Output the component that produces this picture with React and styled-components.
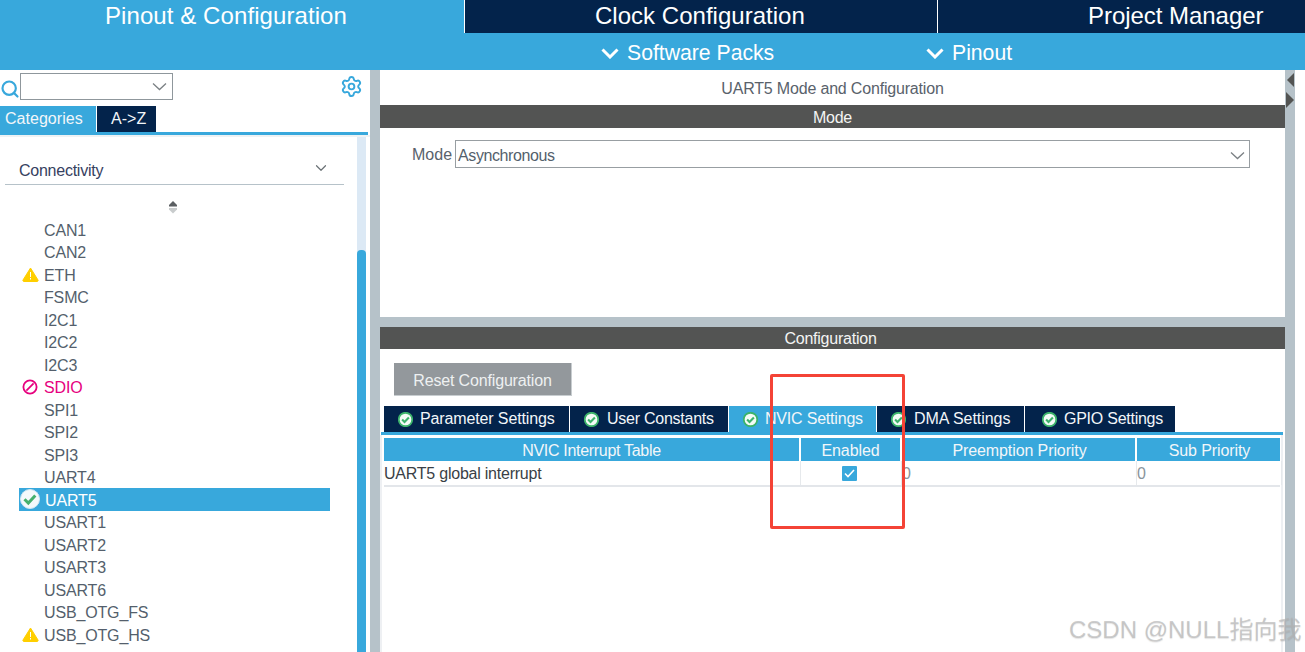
import React from "react";
import styled, { createGlobalStyle } from "styled-components";
import { Search, Settings, ChevronDown } from "lucide-react";

const BLUE = "#38a8dc";
const NAVY = "#03234b";
const SPLIT = "#b6c2c9";
const BAR = "#535453";

const GlobalStyle = createGlobalStyle`
  html, body { margin: 0; padding: 0; background: #fff; }
  * { box-sizing: border-box; }
  body { font-family: "Liberation Sans", Arial, sans-serif; font-size: 16px; }
`;

const Page = styled.div`
  position: relative;
  width: 1305px;
  height: 652px;
  overflow: hidden;
  display: flex;
  flex-direction: column;
`;

const TopTabs = styled.div`
  display: grid;
  grid-template-columns: 464px 472px 1fr;
  column-gap: 1px;
  height: 33px;
  background: #fff;
`;

const TopTab = styled.div`
  height: 33px;
  padding-left: ${(p) => p.$pad}px;
  background: ${(p) => (p.$active ? BLUE : NAVY)};
  color: #fff;
  font-size: 24px;
  line-height: 32px;
  letter-spacing: ${(p) => p.$track}px;
  white-space: nowrap;
`;

const SubBar = styled.div`
  display: flex;
  height: 37px;
  padding: 3px 0 0 601px;
  background: ${BLUE};
`;

const SubItem = styled.div`
  display: flex;
  align-items: center;
  gap: 8px;
  width: ${(p) => p.$width}px;
  color: #fff;
  font-size: 21.2px;
  line-height: 34px;
  white-space: nowrap;
`;

const Main = styled.div`
  display: flex;
  flex: 1;
  min-height: 0;
`;

const LeftPanel = styled.aside`
  display: flex;
  flex-direction: column;
  width: 370px;
`;

const SearchRow = styled.div`
  display: flex;
  align-items: center;
  height: 36px;
  padding: 0 7px 3px 0;
  color: ${BLUE};
`;

const SearchIcon = styled(Search)`
  flex: none;
  width: 20px;
  height: 20px;
  margin-top: 4px;
`;

const Combo = styled.div`
  display: flex;
  align-items: center;
  justify-content: flex-end;
  width: 153px;
  height: 27px;
  margin-right: auto;
  padding-right: 5px;
  border: 1px solid #8f979c;
  background: #fff;
  color: #7b8084;
`;

const GearIcon = styled(Settings)`
  width: 23px;
  height: 23px;
  color: ${BLUE};
`;

const ModeTabs = styled.div`
  display: flex;
  column-gap: 1px;
  width: 368px;
  height: 29px;
  border-bottom: 3px solid ${BLUE};
`;

const ModeTab = styled.div`
  width: ${(p) => p.$width}px;
  padding-left: ${(p) => p.$pad}px;
  background: ${(p) => (p.$active ? BLUE : NAVY)};
  color: #f2f6f9;
  line-height: 25px;
  letter-spacing: 0.03px;
`;

const ListArea = styled.div`
  display: flex;
  flex: 1;
  min-height: 0;
  border-top: 2px solid #eef2f4;
`;

const ListColumn = styled.div`
  width: 357px;
`;

const CategoryHead = styled.div`
  display: flex;
  align-items: center;
  justify-content: space-between;
  width: 339px;
  height: 48px;
  margin-left: 5px;
  padding: 21px 14px 0 14px;
  border-bottom: 1px solid ${SPLIT};
  color: #36415f;
  letter-spacing: -0.25px;
`;

const HeadChevron = styled(ChevronDown)`
  width: 18px;
  height: 18px;
  margin-top: -7px;
  color: #6b7276;
`;

const ScrollHint = styled.div`
  display: flex;
  justify-content: center;
  width: 346px;
  height: 33px;
  padding-top: 16px;
`;

const Peripherals = styled.ul`
  margin: 0;
  padding: 0 0 0 19px;
  list-style: none;
`;

const Peripheral = styled.li`
  position: relative;
  display: flex;
  align-items: center;
  width: 311px;
  height: 22.5px;
  padding-top: 3px;
  padding-left: ${(p) => (p.$selected ? 26 : 25)}px;
  background: ${(p) => (p.$selected ? BLUE : "transparent")};
  color: ${(p) => (p.$selected ? "#fff" : p.$pink ? "#e6007e" : "#545f6c")};
  letter-spacing: -0.15px;
`;

const StatusSlot = styled.span`
  position: absolute;
  left: ${(p) => p.$left}px;
  top: ${(p) => p.$top}px;
  display: flex;
`;

const Scrollbar = styled.div`
  width: 9px;
  background: #dce9f5;
`;

const ScrollThumb = styled.div`
  height: 100%;
  margin-top: 113px;
  border-radius: 4px 4px 0 0;
  background: ${BLUE};
`;

const Splitter = styled.div`
  flex: none;
  width: 10px;
  background: ${SPLIT};
`;

const RightSplitter = styled(Splitter)`
  padding: 2px 0 0 1px;
`;

const RightPanel = styled.section`
  display: flex;
  flex-direction: column;
  width: 905px;
`;

const ModePane = styled.div`
  height: 247px;
`;

const PaneTitle = styled.div`
  height: 35px;
  padding-top: 1px;
  color: #59626b;
  line-height: 35px;
  letter-spacing: -0.18px;
  text-align: center;
`;

const SectionBar = styled.div`
  height: ${(p) => p.$height}px;
  padding-right: ${(p) => p.$shift}px;
  background: ${BAR};
  color: #f4f4f4;
  line-height: ${(p) => p.$line}px;
  letter-spacing: -0.23px;
  text-align: center;
`;

const ModeRow = styled.div`
  display: flex;
  align-items: center;
  gap: 3px;
  margin-top: 12px;
  padding-left: 32px;
  color: #59626b;
`;

const ModeLabel = styled.span`
  padding-top: 2px;
`;

const ModeSelect = styled.div`
  display: flex;
  align-items: center;
  justify-content: space-between;
  width: 795px;
  height: 28px;
  padding: 3px 4px 0 2px;
  border: 1px solid #989ea2;
  color: #545f6c;
  letter-spacing: -0.4px;
`;

const HorizontalSplit = styled.div`
  height: 10px;
  background: ${SPLIT};
`;

const ConfigPane = styled.div`
  display: flex;
  flex: 1;
  flex-direction: column;
`;

const ResetButton = styled.div`
  align-self: flex-start;
  width: 178px;
  height: 33px;
  margin: 14px 0 10px 14px;
  border-right: 1px solid #c8cdd0;
  border-bottom: 1px solid #c8cdd0;
  background: #93989c;
  color: #eef0f1;
  line-height: 35px;
  letter-spacing: -0.16px;
  text-align: center;
`;

const ConfigTabs = styled.div`
  display: flex;
  column-gap: 1px;
  width: 902px;
  height: 29px;
  margin-left: 1px;
  padding-left: 3px;
  border-bottom: 3px solid ${BLUE};
`;

const ConfigTab = styled.div`
  display: flex;
  align-items: center;
  gap: ${(p) => p.$gap}px;
  width: ${(p) => p.$width}px;
  padding-left: ${(p) => p.$pad}px;
  background: ${(p) => (p.$active ? BLUE : NAVY)};
  color: #f2f6f9;
  letter-spacing: ${(p) => p.$track}px;
  white-space: nowrap;
`;

const TableFrame = styled.div`
  flex: 1;
  width: 903px;
  padding: 3px 2px 0 2px;
  border-left: 2px solid #eef0f3;
  border-right: 2px solid #eef0f3;
`;

const NvicGrid = styled.div`
  display: grid;
  grid-template-columns: 415px 99px 233px 143px;
  column-gap: 2px;
  width: 896px;
  border-bottom: 2px solid #e3e6ea;
`;

const HeadCell = styled.div`
  height: 23px;
  padding-left: ${(p) => p.$nudge || 0}px;
  background: ${BLUE};
  color: #f2f6f9;
  line-height: 25px;
  letter-spacing: ${(p) => p.$track}px;
  text-align: center;
`;

const DataCell = styled.div`
  display: flex;
  align-items: center;
  justify-content: ${(p) => (p.$center ? "center" : "flex-start")};
  height: 24px;
  margin-right: -2px;
  padding: 1px ${(p) => (p.$center ? 3 : 0)}px 0 0;
  border-right: 1px solid #e6e9ec;
  color: ${(p) => (p.$muted ? "#8a949c" : "#3a3f46")};
  letter-spacing: -0.23px;
`;

const CheckBox = styled.span`
  display: flex;
  align-items: center;
  justify-content: center;
  width: 15px;
  height: 15px;
  margin-top: -1px;
  background: ${BLUE};
  border-radius: 1px;
`;

const RedBox = styled.div`
  position: absolute;
  left: 770px;
  top: 374px;
  width: 135px;
  height: 155px;
  border: 3px solid #f44336;
  border-radius: 2px;
  pointer-events: none;
`;

const Watermark = styled.div`
  position: absolute;
  left: 1069px;
  top: 615px;
  color: rgba(178, 178, 178, 0.65);
  font-family: "Liberation Sans", "Noto Sans CJK SC", sans-serif;
  font-size: 24px;
  line-height: 30px;
  white-space: nowrap;
  text-shadow: 0 1px 1px rgba(120, 120, 120, 0.2);
`;

const Chevron = () => (
  <svg width="18" height="11" viewBox="0 0 18 11" fill="none">
    <path d="M1.5 1.5l7.5 7.5 7.5-7.5" stroke="#fff" strokeWidth="3" />
  </svg>
);

const SmallChevron = () => (
  <svg width="15" height="9" viewBox="0 0 15 9" fill="none">
    <path d="M1 1.5l6.5 6 6.5-6" stroke="#7b8084" strokeWidth="1.3" />
  </svg>
);

const WarnIcon = () => (
  <svg width="17" height="15" viewBox="0 0 17 15">
    <path d="M8.5 1L16 13a1 1 0 0 1-1 1.5H2A1 1 0 0 1 1 13z" fill="#ffcf00" stroke="#ffcf00" strokeLinejoin="round" />
    <rect x="8" y="5" width="1" height="5" fill="#fff" />
    <rect x="8" y="11" width="1" height="1.5" fill="#fff" />
  </svg>
);

const BanIcon = () => (
  <svg width="16" height="16" viewBox="0 0 16 16" fill="none" stroke="#e6007e" strokeWidth="1.8">
    <circle cx="8" cy="8" r="6.6" />
    <path d="M4.4 11.6l7.2-7.2" />
  </svg>
);

const TabBadge = () => (
  <svg width="15" height="15" viewBox="0 0 20 20">
    <circle cx="10" cy="10" r="9" fill="#f4fbf6" stroke="#3db36b" strokeWidth="2.4" />
    <path d="M5.5 10l3.2 3.3 5.8-6" fill="none" stroke="#3db36b" strokeWidth="2.8" />
  </svg>
);

const SelectedBadge = () => (
  <svg width="20" height="20" viewBox="0 0 20 20">
    <circle cx="10" cy="10" r="9.5" fill="#f4f9fb" stroke="#cfe6f2" strokeWidth="1" />
    <path d="M4.5 10.2l3.8 3.8 7-7.5" fill="none" stroke="#45b06d" strokeWidth="3" />
  </svg>
);

const ScrollArrows = () => (
  <svg width="10" height="13" viewBox="0 0 10 13">
    <path d="M5 0l4 4v1.5H1V4z" fill="#5b5f62" />
    <path d="M1 7h8v1.5l-4 4-4-4z" fill="#c9cccd" />
  </svg>
);

const SplitArrows = () => (
  <svg width="9" height="38" viewBox="0 0 9 38">
    <path d="M8 1v14L1 8z" fill="#535453" />
    <path d="M0 20l8 8-8 8z" fill="#535453" />
  </svg>
);

const peripherals = [
  { name: "CAN1" },
  { name: "CAN2" },
  { name: "ETH", status: "warn" },
  { name: "FSMC" },
  { name: "I2C1" },
  { name: "I2C2" },
  { name: "I2C3" },
  { name: "SDIO", status: "ban" },
  { name: "SPI1" },
  { name: "SPI2" },
  { name: "SPI3" },
  { name: "UART4" },
  { name: "UART5", status: "ok" },
  { name: "USART1" },
  { name: "USART2" },
  { name: "USART3" },
  { name: "USART6" },
  { name: "USB_OTG_FS" },
  { name: "USB_OTG_HS", status: "warn" }
];

const configTabs = [
  { label: "Parameter Settings", width: 185, pad: 14, gap: 7, track: -0.13 },
  { label: "User Constants", width: 158, pad: 14, gap: 8, track: -0.25 },
  { label: "NVIC Settings", width: 147, pad: 14, gap: 7, track: -0.2 },
  { label: "DMA Settings", width: 147, pad: 14, gap: 8, track: -0.05 },
  { label: "GPIO Settings", width: 150, pad: 17, gap: 7, track: -0.25 }
];

const statusIcon = (status) => {
  if (status === "warn") return <StatusSlot $left={3} $top={4}><WarnIcon /></StatusSlot>;
  if (status === "ban") return <StatusSlot $left={3} $top={3}><BanIcon /></StatusSlot>;
  if (status === "ok") return <StatusSlot $left={1} $top={1}><SelectedBadge /></StatusSlot>;
  return null;
};

export default function App() {
  return (
    <Page>
      <GlobalStyle />
      <TopTabs>
        <TopTab $active $pad={105} $track={0.08}>Pinout &amp; Configuration</TopTab>
        <TopTab $pad={130} $track={0.02}>Clock Configuration</TopTab>
        <TopTab $pad={150} $track={-0.04}>Project Manager</TopTab>
      </TopTabs>
      <SubBar>
        <SubItem $width={325}><Chevron />Software Packs</SubItem>
        <SubItem $width={120}><Chevron />Pinout</SubItem>
      </SubBar>
      <Main>
        <LeftPanel>
          <SearchRow>
            <SearchIcon strokeWidth={2.6} />
            <Combo><SmallChevron /></Combo>
            <GearIcon strokeWidth={2} />
          </SearchRow>
          <ModeTabs>
            <ModeTab $active $width={96} $pad={5}>Categories</ModeTab>
            <ModeTab $width={59} $pad={14}>A-&gt;Z</ModeTab>
          </ModeTabs>
          <ListArea>
            <ListColumn>
              <CategoryHead>
                Connectivity
                <HeadChevron strokeWidth={1.6} />
              </CategoryHead>
              <ScrollHint><ScrollArrows /></ScrollHint>
              <Peripherals>
                {peripherals.map((item) => (
                  <Peripheral
                    key={item.name}
                    $selected={item.status === "ok"}
                    $pink={item.status === "ban"}
                  >
                    {statusIcon(item.status)}
                    {item.name}
                  </Peripheral>
                ))}
              </Peripherals>
            </ListColumn>
            <Scrollbar><ScrollThumb /></Scrollbar>
          </ListArea>
        </LeftPanel>
        <Splitter />
        <RightPanel>
          <ModePane>
            <PaneTitle>UART5 Mode and Configuration</PaneTitle>
            <SectionBar $height={23} $line={25}>Mode</SectionBar>
            <ModeRow>
              <ModeLabel>Mode</ModeLabel>
              <ModeSelect>
                Asynchronous
                <SmallChevron />
              </ModeSelect>
            </ModeRow>
          </ModePane>
          <HorizontalSplit />
          <ConfigPane>
            <SectionBar $height={22} $line={23} $shift={4}>Configuration</SectionBar>
            <ResetButton>Reset Configuration</ResetButton>
            <ConfigTabs>
              {configTabs.map((tab, i) => (
                <ConfigTab
                  key={tab.label}
                  $width={tab.width}
                  $pad={tab.pad}
                  $gap={tab.gap}
                  $track={tab.track}
                  $active={i === 2}
                >
                  <TabBadge />
                  {tab.label}
                </ConfigTab>
              ))}
            </ConfigTabs>
            <TableFrame>
              <NvicGrid>
                <HeadCell $track={-0.3}>NVIC Interrupt Table</HeadCell>
                <HeadCell $track={-0.1}>Enabled</HeadCell>
                <HeadCell $track={-0.1} $nudge={2}>Preemption Priority</HeadCell>
                <HeadCell $track={-0.1} $nudge={2}>Sub Priority</HeadCell>
                <DataCell>UART5 global interrupt</DataCell>
                <DataCell $center>
                  <CheckBox>
                    <svg width="11" height="9" viewBox="0 0 11 9" fill="none">
                      <path d="M1 4.5l3 3 6-6.5" stroke="#fff" strokeWidth="1.6" />
                    </svg>
                  </CheckBox>
                </DataCell>
                <DataCell $muted>0</DataCell>
                <DataCell $muted>0</DataCell>
              </NvicGrid>
            </TableFrame>
          </ConfigPane>
        </RightPanel>
        <RightSplitter><SplitArrows /></RightSplitter>
      </Main>
      <RedBox />
      <Watermark>CSDN @NULL指向我</Watermark>
    </Page>
  );
}
